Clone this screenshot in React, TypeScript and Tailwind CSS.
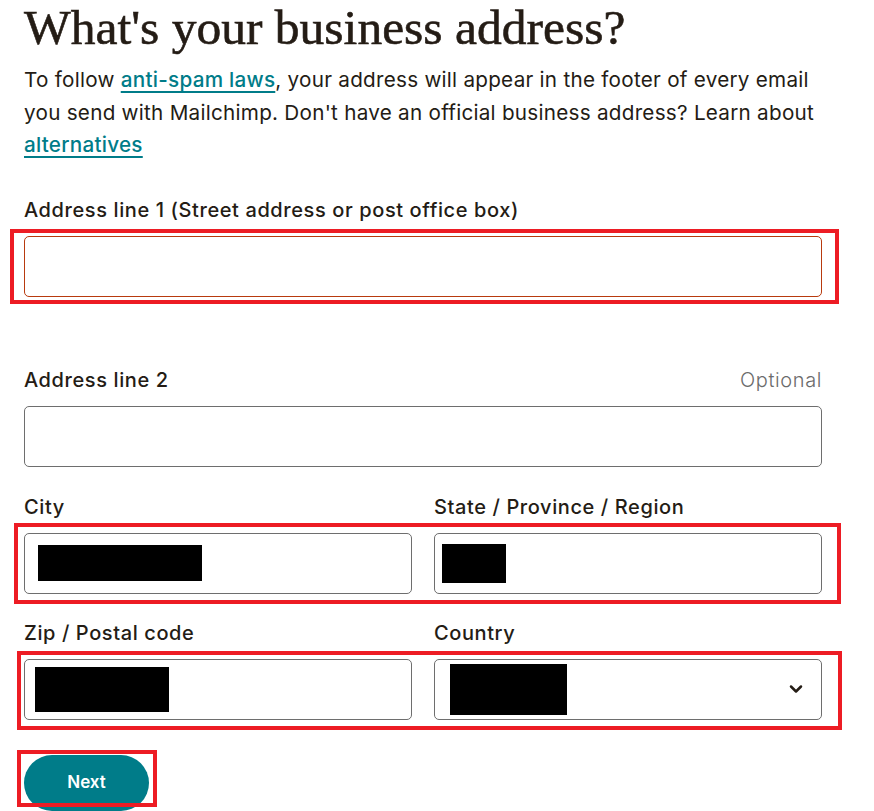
import { ChevronDown } from 'lucide-react';

const sans = "font-['Inter','Liberation_Sans',sans-serif]";

function Label({ text, optional }: { text: string; optional?: boolean }) {
  return (
    <div className="flex items-center justify-between h-6 mb-[14px]">
      <span className={`${sans} text-[20px] tracking-[0.6px] font-medium text-[#241c15]`}>{text}</span>
      {optional && (
        <span className={`${sans} text-[20px] tracking-[0.6px] font-light text-[#6b6b6b]`}>Optional</span>
      )}
    </div>
  );
}

function Field({ error, children }: { error?: boolean; children?: React.ReactNode }) {
  return (
    <div
      className={`relative h-[61px] rounded-[5px] border flex items-center ${
        error ? 'border-[#b83a0e]' : 'border-[#6e6e6e]'
      }`}
    >
      {children}
    </div>
  );
}

function Redbox({ className }: { className: string }) {
  return <div className={`absolute border-4 border-[#ed1c24] pointer-events-none ${className}`} />;
}

export default function App() {
  return (
    <div className="bg-white min-h-[811px] w-[874px] overflow-hidden">
      <div className="pl-6 w-[822px]">
        <h1 className="font-['Liberation_Serif',serif] text-[49.5px] leading-[52px] text-[#241c15] pt-[2px] [-webkit-text-stroke:0.6px_#241c15]">
          What's your business address?
        </h1>
        <p className={`${sans} text-[20.7px] tracking-[0.25px] leading-[32.5px] text-[#241c15] mt-[10px]`}>
          To follow{' '}
          <a className="text-[#007c89] font-medium underline decoration-2 underline-offset-4">anti-spam laws</a>, your
          address will appear in the footer of every email you send with Mailchimp. Don't have an official business
          address? Learn about{' '}
          <a className="text-[#007c89] font-medium underline decoration-2 underline-offset-4">alternatives</a>
        </p>

        <div className="mt-[36px]">
          <Label text="Address line 1 (Street address or post office box)" />
          <div className="relative">
            <Field error />
            <Redbox className="-left-[14px] -right-[17px] -top-[7px] -bottom-[7px]" />
          </div>
        </div>

        <div className="mt-[71px]">
          <Label text="Address line 2" optional />
          <Field />
        </div>

        <div className="relative mt-[28px]">
          <div className="grid grid-cols-2 gap-[22px]">
            <div>
              <Label text="City" />
              <Field>
                <div className="ml-[13px] w-[164px] h-[36px] bg-black" />
              </Field>
            </div>
            <div>
              <Label text="State / Province / Region" />
              <Field>
                <div className="ml-[7px] w-[64px] h-[39px] bg-black" />
              </Field>
            </div>
          </div>
          <Redbox className="-left-[10px] -right-[19px] top-[28px] -bottom-[10px]" />
        </div>

        <div className="relative mt-[27px]">
          <div className="grid grid-cols-2 gap-[22px]">
            <div>
              <Label text="Zip / Postal code" />
              <Field>
                <div className="ml-[10px] w-[134px] h-[45px] bg-black" />
              </Field>
            </div>
            <div>
              <Label text="Country" />
              <Field>
                <div className="ml-[15px] w-[117px] h-[51px] bg-black" />
                <ChevronDown className="absolute right-[15px] text-[#241c15]" size={20} strokeWidth={3} />
              </Field>
            </div>
          </div>
          <Redbox className="-left-[7px] -right-[20px] top-[30px] -bottom-[10px]" />
        </div>

        <div className="relative mt-[35px] w-[125px]">
          <button className={`${sans} w-[125px] h-[56px] rounded-full bg-[#007c89] text-white text-[17px] font-semibold`}>
            Next
          </button>
          <Redbox className="-left-[7px] -right-[8px] -top-[5px] bottom-[4px]" />
        </div>
      </div>
    </div>
  );
}
